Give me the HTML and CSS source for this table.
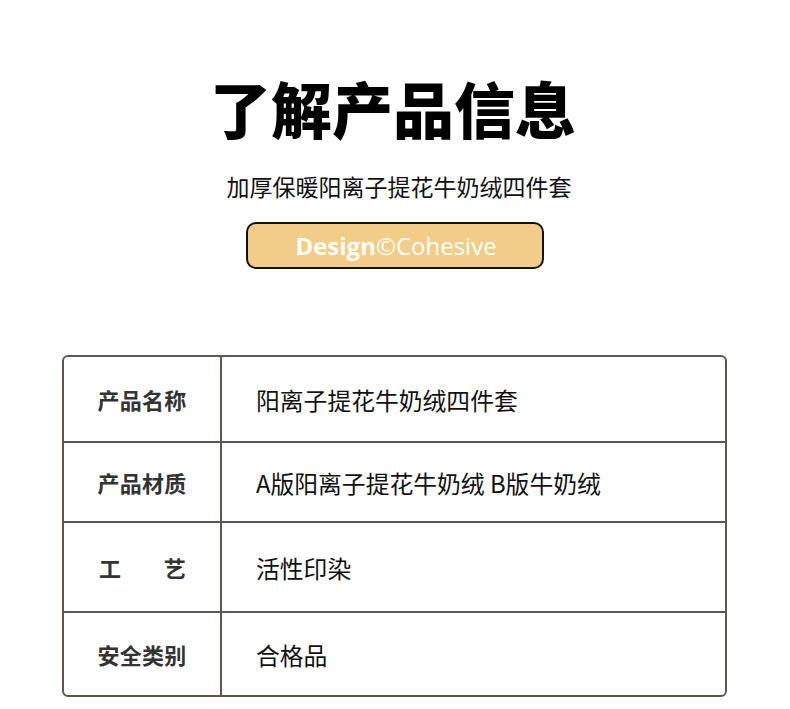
FILE: index.html
```html
<!DOCTYPE html>
<html lang="zh">
<head>
<meta charset="utf-8">
<link rel="stylesheet" href="styles.css">
</head>
<body>
<div class="page">
  <header class="hero">
    <h1 class="title">了解产品信息</h1>
    <p class="subtitle">加厚保暖阳离子提花牛奶绒四件套</p>
    <div class="pill"><b>Design</b>©Cohesive</div>
  </header>
  <div class="table">
    <div class="row r1">
      <div class="label">产品名称</div>
      <div class="value">阳离子提花牛奶绒四件套</div>
    </div>
    <div class="row r2">
      <div class="label">产品材质</div>
      <div class="value">A版阳离子提花牛奶绒 B版牛奶绒</div>
    </div>
    <div class="row r3">
      <div class="label spread"><span>工</span><span>艺</span></div>
      <div class="value">活性印染</div>
    </div>
    <div class="row r4">
      <div class="label">安全类别</div>
      <div class="value">合格品</div>
    </div>
  </div>
</div>
</body>
</html>
```
FILE: styles.css
```css
* { box-sizing: border-box; }
html, body { margin: 0; padding: 0; background: #fff; }
body {
  font-family: "Noto Sans CJK SC", "Noto Sans", sans-serif;
  color: #111;
}
.page {
  width: 790px;
  padding-top: 68px;
}
.hero {
  display: flex;
  flex-direction: column;
  align-items: center;
}
.title {
  margin: 0 0 0 -4px;
  font-size: 61px;
  font-weight: 900;
  line-height: 80px;
  color: #000;
}
.subtitle {
  margin: 21px 0 0;
  font-size: 23px;
  line-height: 34px;
  font-weight: 400;
  color: #111;
  padding-left: 8px;
}
.pill {
  margin-top: 19px;
  width: 298px;
  height: 47px;
  border: 2px solid #111;
  border-radius: 10px;
  background: #f2cd88;
  color: #fff;
  font-family: "Open Sans", "Inter", sans-serif;
  font-size: 24px;
  display: flex;
  align-items: center;
  justify-content: center;
  padding-left: 2px;
}
.pill b { font-weight: 700; }
.table {
  margin: 86px 0 0 62px;
  width: 665px;
  border: 2px solid #5f574f;
  border-radius: 6px;
  display: flex;
  flex-direction: column;
}
.row {
  display: grid;
  grid-template-columns: 158px 1fr;
}
.row + .row { border-top: 2px solid #5f574f; }
.r1 { height: 84px; }
.r2 { height: 80px; }
.r3 { height: 90px; }
.r4 { height: 84px; }
.label {
  border-right: 2px solid #5f574f;
  display: flex;
  align-items: center;
  justify-content: center;
  font-size: 22px;
  font-weight: 700;
  color: #333;
  letter-spacing: 0.2px;
}
.label.spread {
  justify-content: space-between;
  padding: 0 34px 0 35px;
}
.value {
  display: flex;
  align-items: center;
  padding-left: 34px;
  font-size: 23.8px;
  font-weight: 400;
  color: #111;
}
```
